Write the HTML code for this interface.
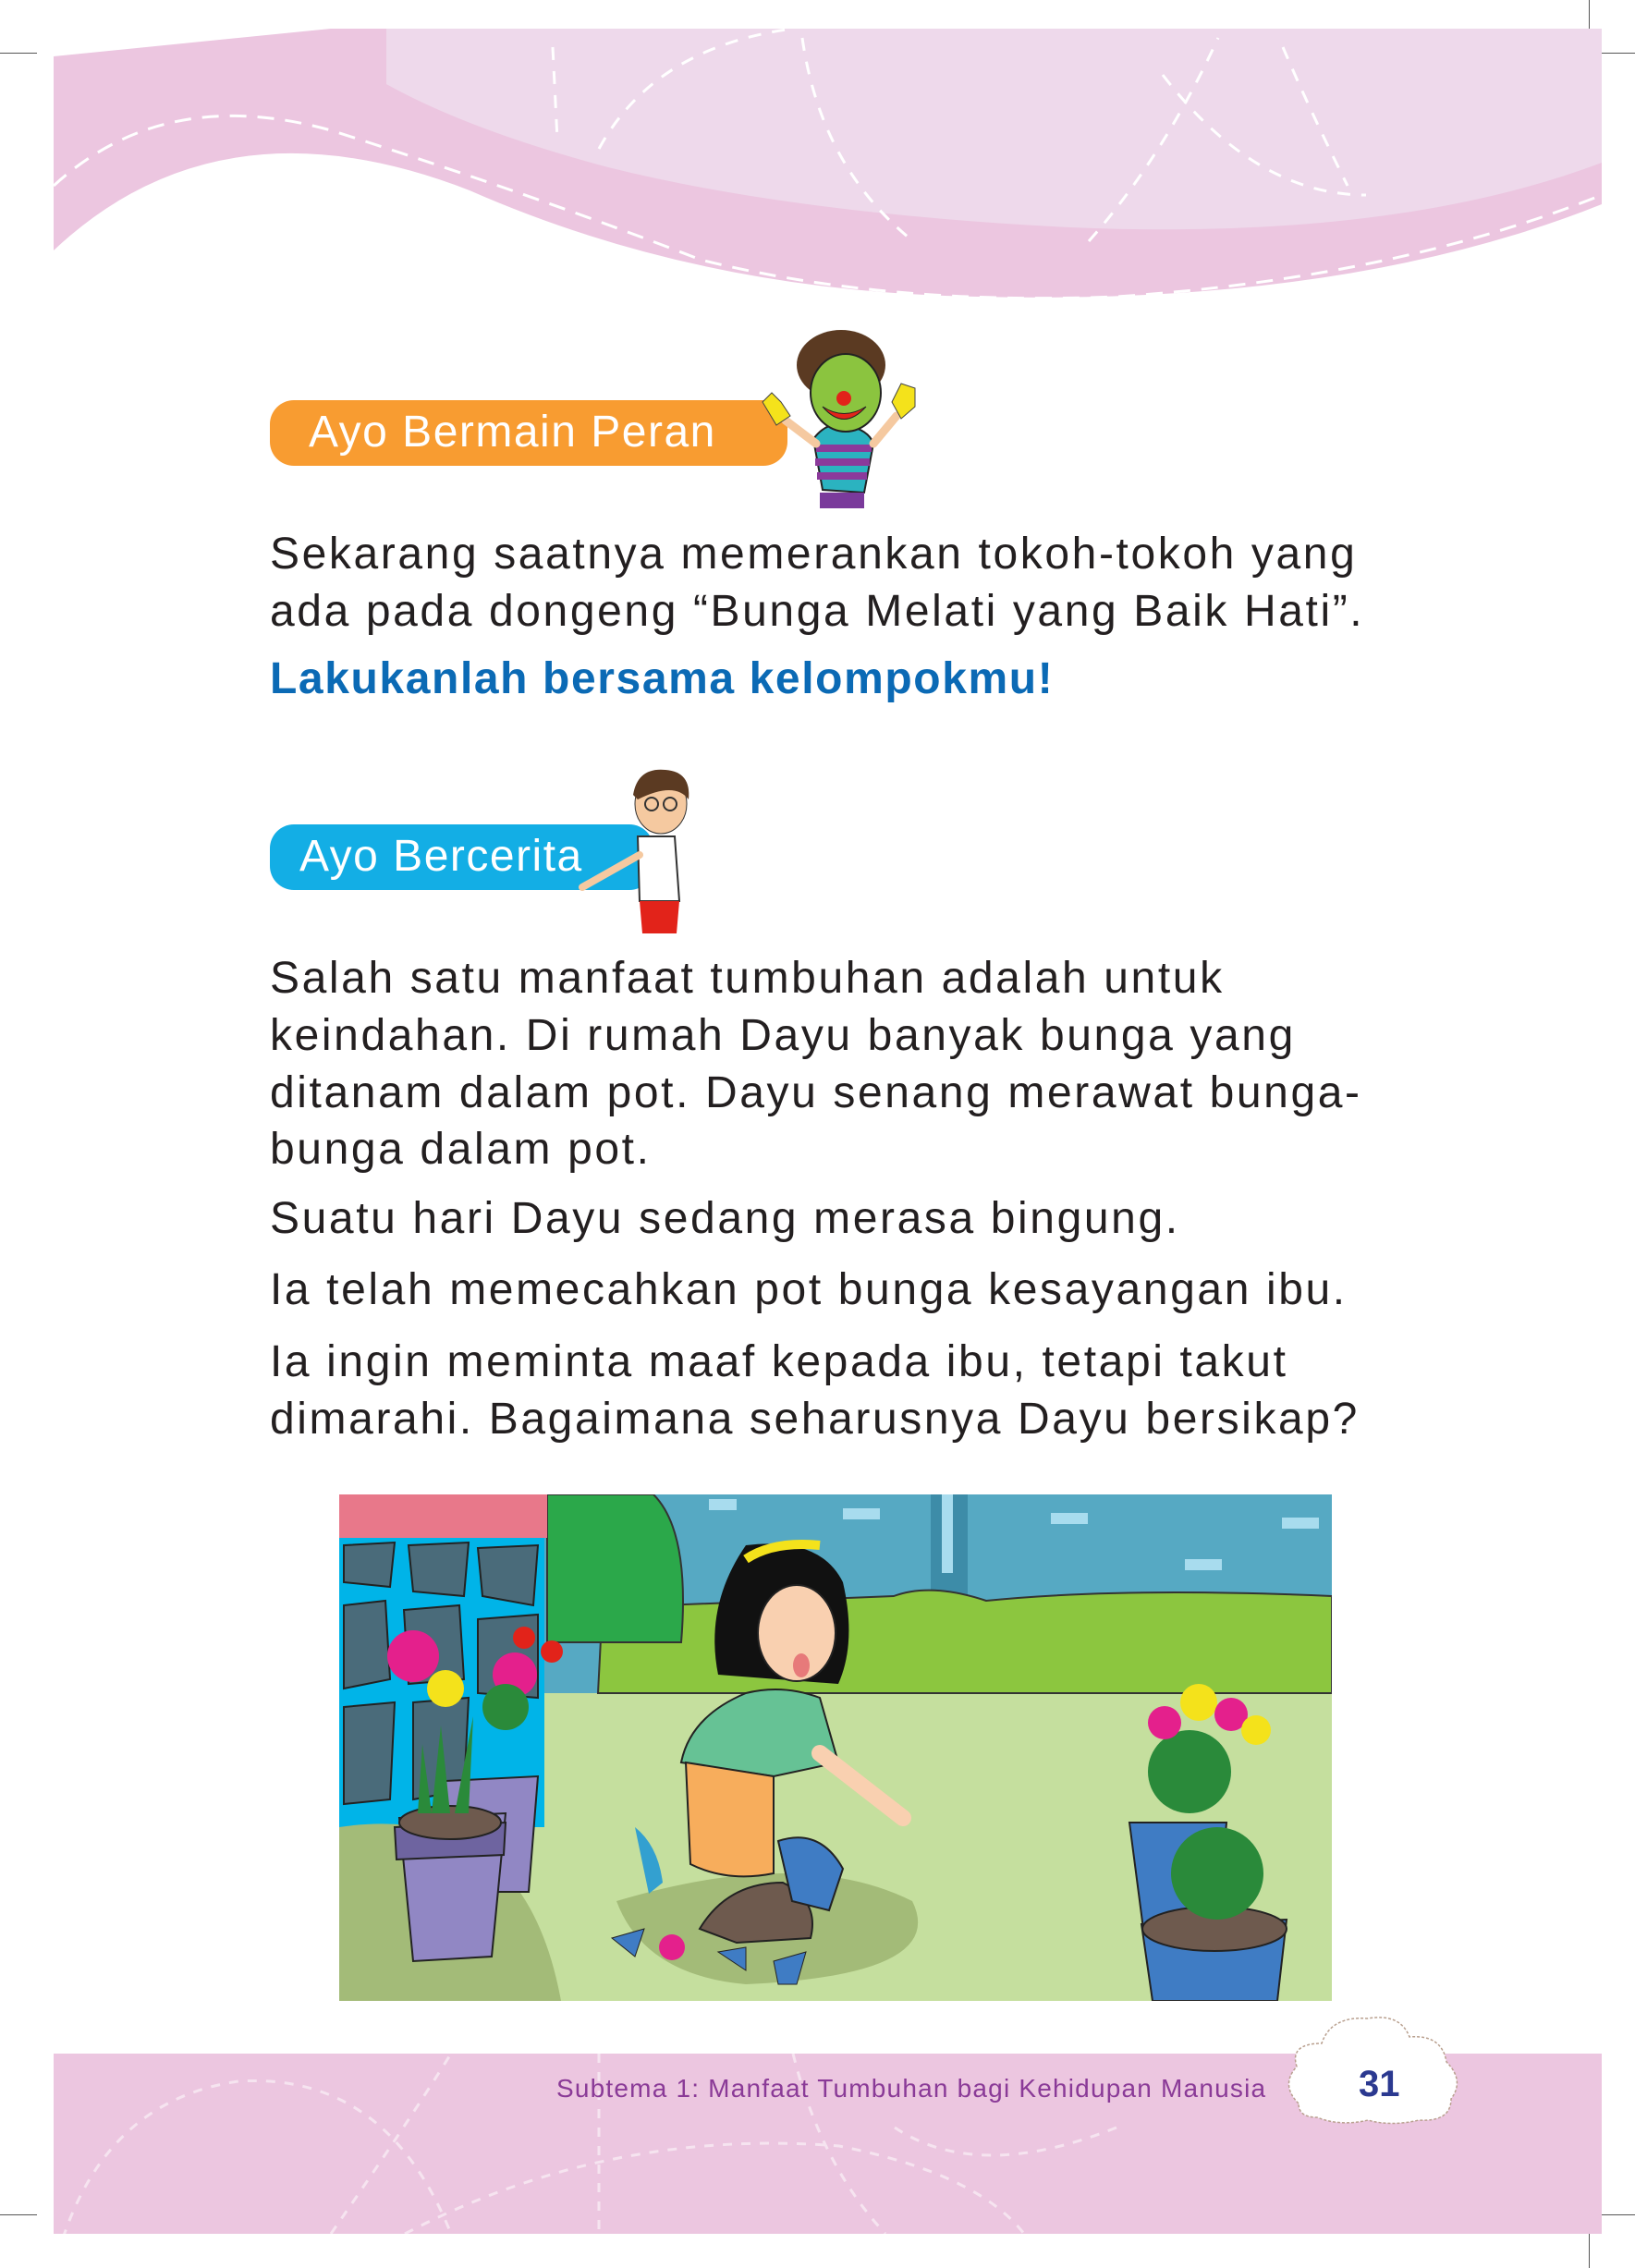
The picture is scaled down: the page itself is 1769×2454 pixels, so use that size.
<!DOCTYPE html>
<html><head><meta charset="utf-8"><style>
html,body{margin:0;padding:0;background:#fff}
body{width:1769px;height:2454px;position:relative;overflow:hidden;font-family:"Liberation Sans",sans-serif}
.t{position:absolute;left:292px;font-size:48px;color:#231f20;white-space:nowrap;letter-spacing:2.6px}
.pill{position:absolute;border-radius:26px;color:#fff;font-size:48px;line-height:70px;padding-left:42px;box-sizing:border-box;letter-spacing:1.5px}
</style></head><body>
<div style="position:absolute;left:0;top:57px;width:40px;height:1px;background:#555"></div>
<div style="position:absolute;right:0;top:57px;width:40px;height:1px;background:#555"></div>
<div style="position:absolute;left:1719px;top:0;width:1px;height:40px;background:#555"></div>
<div style="position:absolute;left:0;top:2396px;width:40px;height:1px;background:#555"></div>
<div style="position:absolute;right:0;top:2396px;width:40px;height:1px;background:#555"></div>
<div style="position:absolute;left:1719px;top:2414px;width:1px;height:40px;background:#555"></div>

<svg style="position:absolute;left:58px;top:31px" width="1675" height="295" viewBox="0 0 1675 295">
<path d="M0 30 L300 0 L1675 0 L1675 190 Q1400 300 1000 290 Q700 285 450 175 Q180 70 0 240 Z" fill="#ecc6e0"/>
<path d="M360 0 L1675 0 L1675 145 Q1450 230 1100 215 Q800 200 600 150 Q450 110 360 60 Z" fill="#eed9eb"/>
<path d="M0 170 Q120 60 300 110 Q520 180 700 250 Q900 300 1150 290 Q1450 270 1675 180" fill="none" stroke="#fff" stroke-width="3" stroke-dasharray="18 12"/>
<path d="M590 130 Q650 20 800 0 M810 10 Q830 150 930 230 M1120 230 Q1200 140 1260 10 M1200 50 Q1300 180 1420 180 M1330 20 Q1360 90 1400 170 M540 20 L545 120" fill="none" stroke="#fff" stroke-width="3" stroke-dasharray="14 12"/>
</svg>

<div class="pill" style="left:292px;top:433px;width:560px;height:71px;background:#f89c31">Ayo Bermain Peran</div>
<svg style="position:absolute;left:795px;top:355px" width="205" height="195" viewBox="0 0 205 195">
<path d="M95 175 L85 120 Q100 100 120 105 Q145 110 150 125 L140 178 Z" fill="#2bb3c0" stroke="#222" stroke-width="2"/>
<path d="M88 130 L148 130 M87 145 L146 145 M89 160 L143 160" stroke="#8b3a9b" stroke-width="8"/>
<path d="M92 178 L140 178 L140 195 L92 195 Z" fill="#7a3a9b"/>
<path d="M88 125 L55 100 M150 125 L175 95" stroke="#f5c9a0" stroke-width="9" stroke-linecap="round"/>
<path d="M30 80 L40 70 L50 80 L60 95 L45 105 Z" fill="#f4e21b" stroke="#444"/>
<path d="M170 80 L180 60 L195 65 L195 85 L180 98 Z" fill="#f4e21b" stroke="#444"/>
<ellipse cx="115" cy="40" rx="48" ry="38" fill="#5b3a22"/>
<ellipse cx="120" cy="70" rx="38" ry="42" fill="#8bc43f" stroke="#222" stroke-width="2"/>
<circle cx="118" cy="76" r="8" fill="#e2231a"/>
<path d="M95 85 Q118 112 142 85 Q118 100 95 85Z" fill="#e2231a" stroke="#222"/>
</svg>

<div class="t" style="top:572px">Sekarang saatnya memerankan tokoh-tokoh yang</div>
<div class="t" style="top:634px">ada pada dongeng “Bunga Melati yang Baik Hati”.</div>
<div class="t" style="top:707px;color:#0b6ab5;font-weight:bold;letter-spacing:1.6px">Lakukanlah bersama kelompokmu!</div>

<div class="pill" style="left:292px;top:892px;width:415px;height:71px;background:#13aee5;padding-left:32px">Ayo Bercerita</div>
<svg style="position:absolute;left:620px;top:825px" width="150" height="190" viewBox="0 0 150 190">
<path d="M70 80 L110 80 L115 150 L72 150 Z" fill="#fff" stroke="#333" stroke-width="2"/>
<path d="M72 150 L115 150 L112 185 L75 185 Z" fill="#e2231a"/>
<path d="M72 100 L10 135" stroke="#f5c9a0" stroke-width="8" stroke-linecap="round"/>
<ellipse cx="95" cy="45" rx="28" ry="32" fill="#f5c9a0" stroke="#333"/>
<path d="M65 35 Q70 5 100 8 Q128 10 125 40 Q110 20 70 40Z" fill="#5b3a22"/>
<circle cx="85" cy="45" r="7" fill="none" stroke="#333" stroke-width="2"/><circle cx="105" cy="45" r="7" fill="none" stroke="#333" stroke-width="2"/>
</svg>

<div class="t" style="top:1031px">Salah satu manfaat tumbuhan adalah untuk</div>
<div class="t" style="top:1093px">keindahan. Di rumah Dayu banyak bunga yang</div>
<div class="t" style="top:1155px">ditanam dalam pot. Dayu senang merawat bunga-</div>
<div class="t" style="top:1216px">bunga dalam pot.</div>
<div class="t" style="top:1291px">Suatu hari Dayu sedang merasa bingung.</div>
<div class="t" style="top:1368px">Ia telah memecahkan pot bunga kesayangan ibu.</div>
<div class="t" style="top:1446px">Ia ingin meminta maaf kepada ibu, tetapi takut</div>
<div class="t" style="top:1508px">dimarahi. Bagaimana seharusnya Dayu bersikap?</div>

<svg style="position:absolute;left:367px;top:1617px" width="1074" height="548" viewBox="0 0 1074 548">
<rect width="1074" height="548" fill="#c5df9e"/>
<rect width="1074" height="215" fill="#56a9c3"/>
<rect x="640" y="0" width="40" height="110" fill="#3d8ca8"/><rect x="652" y="0" width="12" height="85" fill="#a8dcee"/>
<g fill="#a8dcee"><rect x="400" y="5" width="30" height="12"/><rect x="545" y="15" width="40" height="12"/><rect x="770" y="20" width="40" height="12"/><rect x="915" y="70" width="40" height="12"/><rect x="1020" y="25" width="40" height="12"/></g>
<path d="M290 20 Q330 40 350 120 L600 110 Q640 95 700 115 Q850 100 1074 110 L1074 215 L280 215Z" fill="#8cc63f" stroke="#333" stroke-width="2"/>
<path d="M225 0 L340 0 Q380 40 370 160 L225 160Z" fill="#2ba84a" stroke="#333" stroke-width="2"/>
<rect x="0" y="45" width="222" height="315" fill="#00b4e8"/>
<g fill="#4a6b7a" stroke="#222" stroke-width="2">
<path d="M5 55 L60 52 L55 100 L5 95Z"/><path d="M75 55 L140 52 L135 110 L80 105Z"/><path d="M150 58 L215 55 L210 120 L155 110Z"/>
<path d="M5 120 L50 115 L55 200 L5 210Z"/><path d="M70 125 L130 120 L135 200 L75 205Z"/><path d="M150 135 L215 130 L215 220 L150 215Z"/>
<path d="M5 230 L60 225 L55 330 L5 335Z"/><path d="M80 225 L140 220 L135 320 L80 330Z"/></g>
<rect x="0" y="0" width="225" height="47" fill="#e8788a"/>
<path d="M0 360 Q200 330 240 548 L0 548Z" fill="#a3bb78"/>
<path d="M300 440 Q500 380 620 440 Q660 520 440 530 Q330 520 300 440Z" fill="#a3bb78"/>
<g stroke="#222" stroke-width="2"><path d="M115 310 L215 305 L205 430 L125 430Z" fill="#9187c4"/>
<path d="M65 350 L180 345 L165 500 L80 505Z" fill="#9187c4"/>
<path d="M60 360 L180 355 L178 390 L62 395Z" fill="#6e64a0"/>
<ellipse cx="120" cy="355" rx="55" ry="18" fill="#6e5a4e"/></g>
<g fill="#2a8a3a"><path d="M100 345 L110 250 L120 345Z"/><path d="M125 345 L145 240 L140 345Z"/><path d="M85 345 L90 270 L100 345Z"/></g>
<circle cx="115" cy="210" r="20" fill="#f4e21b"/><circle cx="80" cy="175" r="28" fill="#e4208c"/><circle cx="190" cy="195" r="24" fill="#e4208c"/><circle cx="200" cy="155" r="12" fill="#e2231a"/><circle cx="230" cy="170" r="12" fill="#e2231a"/><circle cx="180" cy="230" r="25" fill="#2a8a3a"/>
<g stroke="#222" stroke-width="2"><path d="M855 355 L960 355 L950 470 L870 470Z" fill="#3f7cc4"/>
<path d="M868 465 L1025 460 L1015 548 L880 548Z" fill="#3f7cc4"/>
<ellipse cx="947" cy="470" rx="78" ry="24" fill="#6e5a4e"/></g>
<circle cx="920" cy="300" r="45" fill="#2a8a3a"/><circle cx="950" cy="410" r="50" fill="#2a8a3a"/>
<circle cx="893" cy="247" r="18" fill="#e4208c"/><circle cx="930" cy="225" r="20" fill="#f4e21b"/><circle cx="965" cy="238" r="18" fill="#e4208c"/><circle cx="992" cy="255" r="16" fill="#f4e21b"/>
<path d="M440 55 Q520 45 545 95 Q560 160 540 205 L410 195 Q395 120 440 55Z" fill="#111"/>
<path d="M440 70 Q470 50 520 55" stroke="#f4e21b" stroke-width="10" fill="none"/>
<ellipse cx="495" cy="150" rx="42" ry="52" fill="#f9d0b0" stroke="#222" stroke-width="2"/>
<ellipse cx="500" cy="185" rx="9" ry="13" fill="#e77a7a"/>
<path d="M440 215 Q480 205 520 220 L540 290 L470 305 L370 290 Q380 240 440 215Z" fill="#66c295" stroke="#222" stroke-width="2"/>
<path d="M375 290 L470 305 L470 410 Q420 420 380 400Z" fill="#f7ad5c" stroke="#222" stroke-width="2"/>
<path d="M320 360 Q345 380 350 420 L335 432Z" fill="#33a0d0"/>
<path d="M520 280 L610 350" stroke="#f9d0b0" stroke-width="18" stroke-linecap="round"/>
<path d="M390 470 Q420 420 480 420 Q520 440 510 480 L430 485Z" fill="#6e5a4e" stroke="#222" stroke-width="2"/>
<path d="M475 375 Q520 360 545 405 L530 450 L490 440Z" fill="#3f7cc4" stroke="#222" stroke-width="2"/>
<path d="M410 495 L440 490 L440 515 Z M470 505 L505 495 L495 530 L475 530Z M295 480 L330 470 L320 500Z" fill="#3f7cc4" stroke="#222"/>
<circle cx="360" cy="490" r="14" fill="#e4208c"/>
</svg>

<svg style="position:absolute;left:58px;top:2222px" width="1675" height="195" viewBox="0 0 1675 195">
<rect width="1675" height="195" fill="#ecc6e0"/>
<path d="M10 200 Q60 50 200 30 Q360 20 430 195 M300 195 Q380 80 430 0 M380 195 Q600 80 850 100 Q1000 130 1050 195 M590 0 L590 195 M910 80 Q1000 140 1150 80 M800 0 Q830 120 900 195" fill="none" stroke="#f6e4f0" stroke-width="3" stroke-dasharray="10 10"/>
</svg>
<div style="position:absolute;left:602px;top:2244px;font-size:28px;color:#8a3a97;white-space:nowrap;letter-spacing:1.2px">Subtema 1: Manfaat Tumbuhan bagi Kehidupan Manusia</div>
<svg style="position:absolute;left:1385px;top:2176px" width="202" height="126" viewBox="0 0 202 126">
<path d="M20 100 Q0 80 18 60 Q10 35 45 35 Q55 5 95 8 Q130 2 140 28 Q175 25 180 55 Q200 75 185 95 Q185 120 150 118 Q120 125 95 118 Q65 125 40 115 Q20 115 20 100Z" fill="#fff" stroke="#b9a08f" stroke-width="1.5" stroke-dasharray="3 2"/>
</svg>
<div style="position:absolute;left:1470px;top:2233px;font-size:40px;font-weight:bold;color:#2b3990">31</div>
</body></html>
